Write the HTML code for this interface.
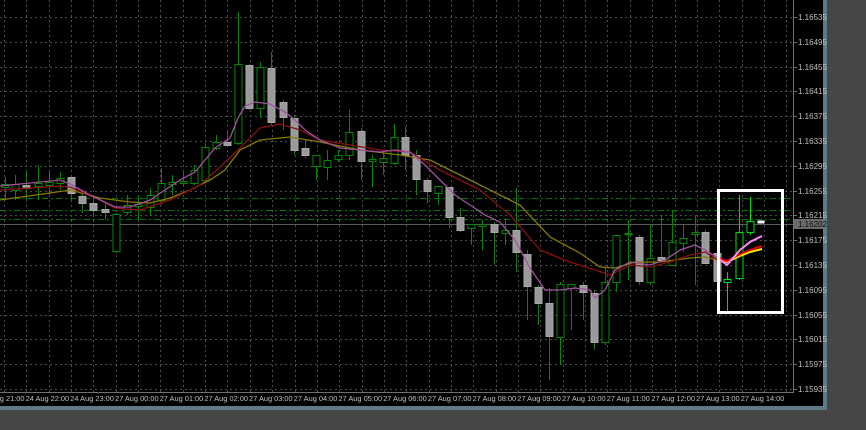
<!DOCTYPE html>
<html><head><meta charset="utf-8"><style>
html,body{margin:0;padding:0;background:#464646;overflow:hidden}
svg{display:block}
text{font-family:"Liberation Sans",sans-serif;font-size:8px;fill:#c0c0c0}
text.t{font-size:7.4px}
</style></head><body>
<svg id="s" width="866" height="430" xmlns="http://www.w3.org/2000/svg">
<rect x="0" y="0" width="866" height="430" fill="#464646"/>
<rect x="0" y="0" width="823" height="406" fill="#000"/>
<rect x="823" y="0" width="4" height="410" fill="#5d7a88"/>
<rect x="0" y="406" width="827" height="4" fill="#5d7a88"/>
<g id="g"></g>
</svg>
<script>
var g=document.getElementById('g'),h='';
function L(x1,y1,x2,y2,c,w,d){h+='<line x1="'+x1+'" y1="'+y1+'" x2="'+x2+'" y2="'+y2+'" stroke="'+c+'" stroke-width="'+(w||1)+'"'+(d?' stroke-dasharray="'+d+'"':'')+'/>';}
for(var k=0;k<16;k++){var y=Math.round(17+24.8*k)+.5;L(0,y,793,y,'#4c4c4c',1,'2,3');}
for(var x=4;x<793;x+=22.35){var xx=Math.round(x)+.5;L(xx,0,xx,392,'#4c4c4c',1,'2,3');}
[198,210,219].forEach(function(y){L(0,y+.5,793,y+.5,'#007a00',1,'6,3,2,3');});
L(0,224.5,793,224.5,'#5a5a5a',1);
L(793.5,0,793.5,392,'#707070');L(0,392.5,794,392.5,'#707070');
var pr=['1.16535','1.16495','1.16455','1.16415','1.16375','1.16335','1.16295','1.16255','1.16215','1.16175','1.16135','1.16095','1.16055','1.16015','1.15975','1.15935'];
for(var k=0;k<16;k++){var y=Math.round(17+24.8*k);L(793,y+.5,797,y+.5,'#707070');h+='<text x="798" y="'+(y+3)+'">'+pr[k]+'</text>';}
h+='<rect x="794" y="219" width="29" height="10" fill="#6a6a6a"/><text x="798" y="227" style="fill:#111">1.16202</text>';
var tl=['24 Aug 21:00','24 Aug 22:00','24 Aug 23:00','27 Aug 00:00','27 Aug 01:00','27 Aug 02:00','27 Aug 03:00','27 Aug 04:00','27 Aug 05:00','27 Aug 06:00','27 Aug 07:00','27 Aug 08:00','27 Aug 09:00','27 Aug 10:00','27 Aug 11:00','27 Aug 12:00','27 Aug 13:00','27 Aug 14:00'];
for(var i=0;i<tl.length;i++){var x=115+44.7*(i-3);h+='<text class="t" x="'+x.toFixed(1)+'" y="401">'+tl[i]+'</text>';}
var C=[[5,184,187,177,200,'u'],[15,184,190,175,200,'u'],[26,185,188,170,200,'d'],[38,183,186,165,200,'u'],[49,182,185,170,195,'u'],[60,178,183,172,190,'u'],[71,177,193,177,200,'d'],[82,196,203,190,213,'d'],[93,203,210,195,215,'d'],[105,209,212,203,220,'d'],[116,214,251,213,253,'u'],[127,205,212,195,215,'u'],[138,204,206,195,220,'u'],[150,195,207,188,215,'u'],[161,183,200,168,205,'u'],[172,182,184,175,195,'u'],[183,181,183,172,185,'u'],[194,170,183,165,185,'u'],[205,147,180,143,182,'u'],[216,142,148,135,150,'u'],[227,142,145,130,145,'d'],[238,64,143,12,145,'u'],[249,65,108,64,110,'d'],[260,67,108,62,118,'u'],[271,68,122,52,125,'d'],[283,102,117,100,130,'d'],[294,118,150,115,155,'d'],[305,148,155,140,158,'d'],[316,155,166,155,180,'u'],[327,160,167,150,180,'u'],[338,155,159,150,162,'u'],[349,132,155,110,160,'u'],[361,131,161,128,180,'d'],[372,159,161,155,187,'u'],[383,158,162,150,175,'u'],[394,137,163,124,165,'u'],[405,137,155,127,170,'d'],[416,155,179,150,195,'d'],[427,180,191,178,203,'d'],[438,186,193,186,205,'u'],[449,187,217,187,228,'d'],[460,217,230,208,232,'d'],[471,224,228,224,245,'u'],[482,224,226,220,250,'u'],[494,224,232,222,265,'d'],[505,230,233,218,245,'u'],[516,230,252,188,272,'d'],[527,254,286,250,320,'d'],[538,287,303,285,325,'d'],[549,303,336,288,380,'d'],[560,284,337,282,365,'u'],[571,284,288,284,330,'u'],[583,285,292,282,320,'d'],[594,293,342,290,350,'d'],[605,282,342,268,345,'u'],[616,235,282,235,292,'u'],[628,233,234,220,280,'u'],[639,237,281,235,285,'d'],[650,258,282,225,285,'u'],[661,257,260,215,262,'d'],[672,242,265,210,265,'u'],[683,238,243,225,252,'u'],[695,232,234,215,285,'u'],[705,232,263,230,264,'d'],[717,253,281,230,290,'d'],[727,279,282,272,312,'u'],[739,232,278,195,280,'u'],[750,221,232,197,235,'u'],[761,221,223,221,223,'w']];
C.forEach(function(c){var x=c[0],inb=x>715;var gc=inb?'#00e000':'#008a00';
 if(c[5]=='w'){h+='<rect x="'+(x-3.5)+'" y="220.5" width="7" height="3" fill="#fff"/>';return;}
 var wc=c[5]=='d'?(inb?'#00e000':'#1a7a1a'):gc;
 L(x+.5,c[3],x+.5,c[4],wc,1);
 var ht=Math.max(c[2]-c[1],1);
 if(c[5]=='u')h+='<rect x="'+(x-3)+'" y="'+(c[1]+.5)+'" width="7" height="'+ht+'" fill="#000" stroke="'+gc+'" stroke-width="1"/>';
 else h+='<rect x="'+(x-3)+'" y="'+(c[1]+.5)+'" width="7" height="'+ht+'" fill="#9a9a9a" stroke="#a8a8a8" stroke-width="1"/>';
});
function P(pts,c,w){h+='<polyline fill="none" stroke="'+c+'" stroke-width="'+(w||1.3)+'" points="'+pts.map(function(p){return p.join(',')}).join(' ')+'"/>';}
var ol=[[0,200],[50,193],[70,190],[100,198],[130,202],[150,203],[170,198],[190,190],[210,180],[225,170],[240,150],[260,140],[290,137],[320,142],[360,150],[400,155],[430,160],[460,175],[490,190],[520,205],[550,237],[580,253],[600,267],[615,268],[635,262],[660,262],[690,258],[705,257],[718,260]];
var rd=[[0,190],[60,186],[70,187],[100,200],[115,208],[140,210],[170,200],[200,185],[220,167],[240,148],[260,128],[280,124],[300,130],[320,140],[350,145],[380,150],[410,152],[440,170],[480,190],[510,215],[540,250],[570,262],[595,270],[610,275],[630,265],[650,267],[670,262],[690,255],[705,252],[718,260]];
var pu=[[0,186],[60,180],[70,184],[90,195],[115,207],[130,207],[150,200],[165,190],[180,180],[195,172],[205,160],[215,148],[230,138],[238,118],[245,106],[255,102],[270,104],[285,112],[295,120],[305,130],[320,140],[340,148],[360,150],[380,152],[395,150],[410,152],[425,165],[440,180],[455,195],[470,205],[485,215],[500,222],[515,240],[530,268],[545,290],[560,290],[575,288],[590,290],[595,298],[605,290],[615,270],[630,262],[650,265],[665,260],[680,250],[695,245],[705,250],[718,258]];
P(ol,'#8a7a00');P(rd,'#8a1010');P(pu,'#a050a0');
P([[718,260],[727,262],[740,256],[750,252],[762,249]],'#ffee00',2);
P([[718,258],[727,261],[740,254],[750,250],[762,246]],'#e00000',2);
P([[718,258],[727,265],[740,250],[750,242],[762,236]],'#ff88ff',2);
h+='<rect x="718.5" y="190.5" width="64" height="122" fill="none" stroke="#fff" stroke-width="3"/>';
g.innerHTML=h;
</script>
</body></html>
